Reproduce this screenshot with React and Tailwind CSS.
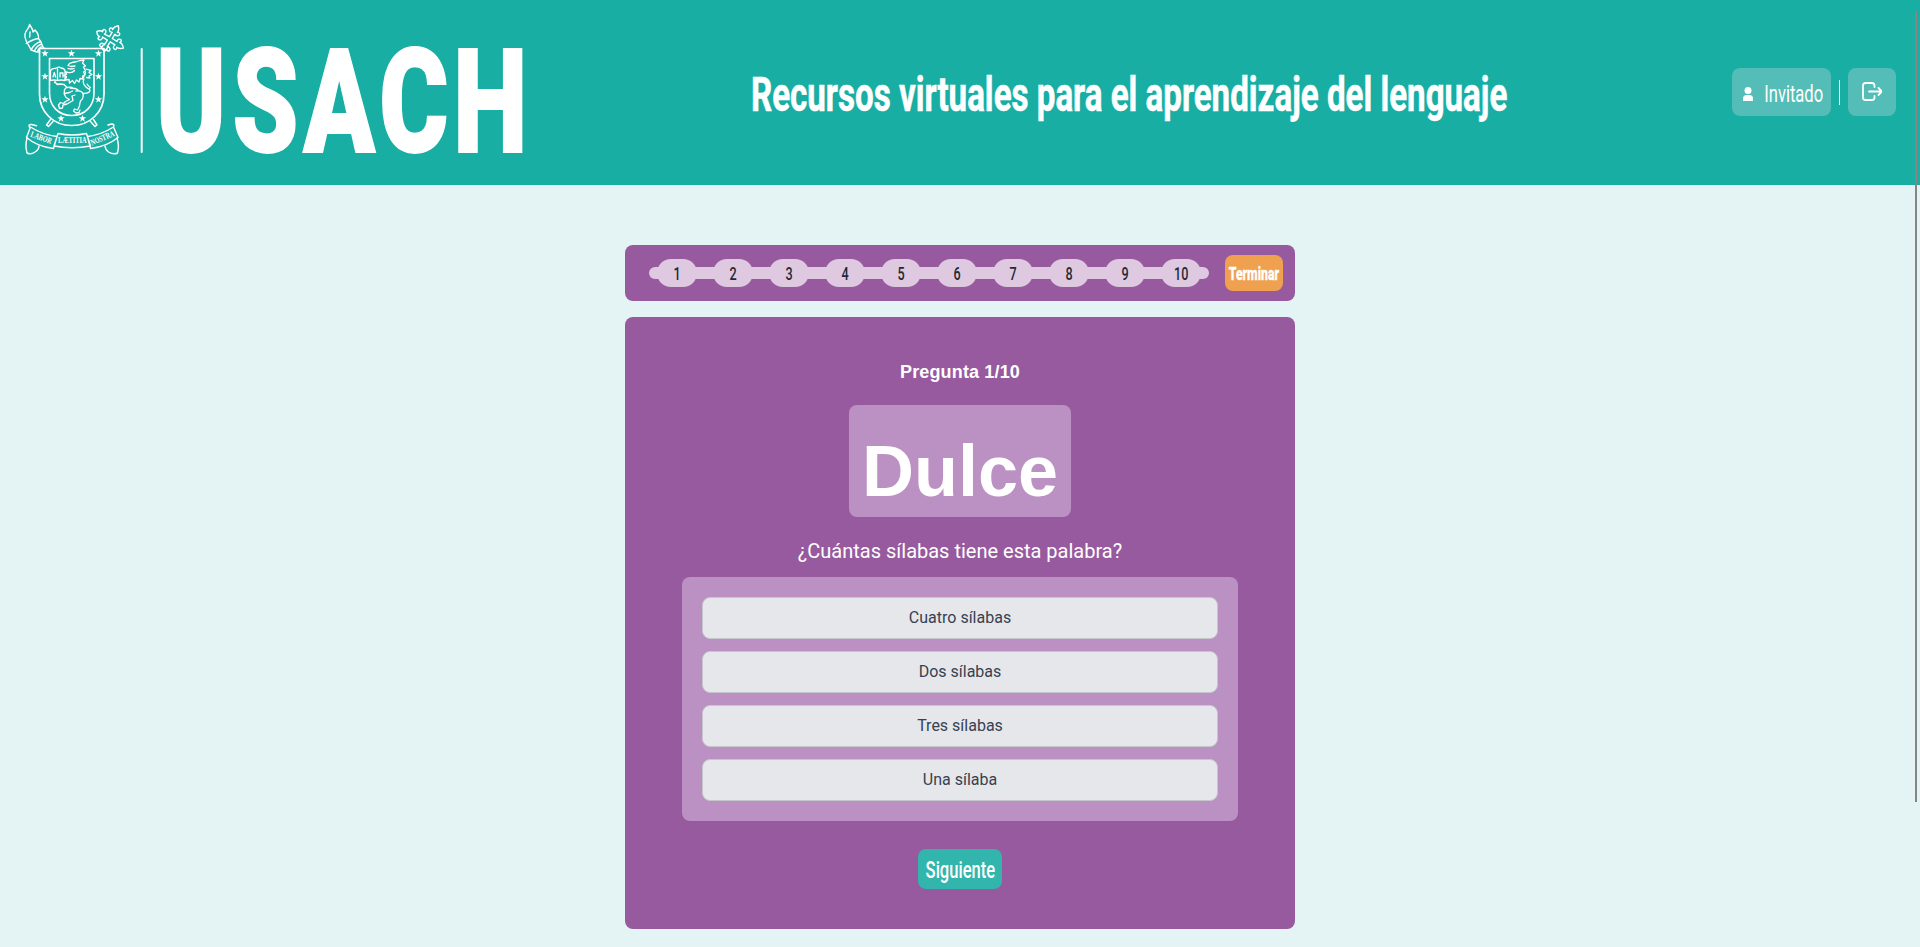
const star = "M0,-3.8 L0.9,-1.2 3.7,-1.2 1.5,0.5 2.3,3.2 0,1.6 -2.3,3.2 -1.5,0.5 -3.7,-1.2 -0.9,-1.2Z";
const stars = [[45, 53.5], [71.5, 53.5], [98.5, 53.5], [45, 76.5], [98.5, 76.5], [45, 99.5], [98.5, 99.5], [61, 118.5], [82.5, 118.5]];

function Logo() {
  return (
    <svg width="540" height="185" viewBox="0 0 540 185" fill="none" stroke="#fff" strokeLinejoin="round" strokeLinecap="round" className="shrink-0 overflow-visible">
      {/* torch */}
      <g strokeWidth="1.4">
        <path d="M29.5 24.500c.5 3-3.500 5-4.500 9.500-.6 3 .2 5 1.200 7M29.500 24.500c2.500 3.500 3.500 5 3.500 7.500l2-2c2.500 2.500 4 4.500 3.500 8.500M26.200 41l5 9c2-4.500 5-7 9.500-8.500l-2.200-3c-4 .5-9 3-12.300 5" />
        <path d="M31.200 50l3 1.200c1.500-3.500 4-6 7.500-7.200l-1-2.500M34.200 51.200l3 .8c1-3 3-5 5.500-5.500l-1-2.500M37.200 52l2.500-.5M42.700 46.500l1.500 2M30 32c-.5 2 .5 3.500-.5 5" />
      </g>
      {/* cross */}
      <g strokeWidth="1.250" transform="translate(109.700 39.500) rotate(32) scale(1.12)">
        <path d="M-1.500 -2V-6.500C-4 -5.500 -5.500 -7 -5 -9C-4 -10 -3 -9.500 -2.500 -9C-3 -11.500 -1.500 -13 0 -14.500C1.500 -13 3 -11.500 2.500 -9C3 -9.500 4 -10 5 -9C5.500 -7 4 -5.500 1.500 -6.500V-2H6.500C5.500 -4 7 -5.500 9 -5C10 -4 9.500 -3 9 -2.500C11.500 -3 13 -1.500 14.500 0C13 1.500 11.500 3 9 2.500C9.500 3 10 4 9 5C7 5.500 5.500 4 6.500 1.500H1.500V6.500C4 5.500 5.500 7 5 9C4 10 3 9.500 2.500 9C2.500 10 1.500 10.500 0 11C-1.500 10.500 -3 10 -2.500 9C-3 9.500 -4 10 -5 9C-5.500 7 -4 5.500 -1.500 6.500V1.500H-6.500C-5.500 4 -7 5.500 -9 5C-10 4 -9.500 3 -9 2.500C-11.500 3 -12.500 1.500 -13.500 0C-12.500 -1.500 -11.500 -3 -9 -2.500C-9.500 -3 -10 -4 -9 -5C-7 -5.500 -5.500 -4 -6.500 -1.500Z" />
      </g>
      <path strokeWidth="1.300" d="M104.500 43.500L101 48M108.500 46.500L104.500 51.500" />
      {/* shield */}
      <path strokeWidth="1.700" d="M39.500 48.500H104V94C104 112 90 125.500 71.700 125.500S39.500 112 39.500 94Z" />
      <path strokeWidth="1.600" d="M49.500 58.500H94V93C94 106 85 115.500 71.700 115.500S49.500 106 49.500 93Z" />
      {stars.map(([x, y]) => (
        <path key={`${x}-${y}`} d={star} transform={`translate(${x} ${y})`} fill="#fff" stroke="none" />
      ))}
      {/* lion holding a tablet */}
      <g strokeWidth="1.300">
        <path d="M50.500 70.500q2-2.500 5-2q3-2.500 5.500-.5q3 0 4 2.500v10q-4-1-7.500 0q-3.500-1-7 0ZM57.500 69v11M53 77l1.300-4.500 1.300 4.500M60 77v-4h3v4" />
        <path d="M68 65.500q1-2.500 4-3l5-1 3-1 4-.5-1.500 3 3 3-2 1 2 4-2 1 1.500 3-2.500 1 .5 3-3-.5-1 3.500-2.500-2-2 3.500-2-3-3 2.500-.5-3.500-3.500.5 1-3.500-3-1 3-1-1-2.500 3 .5q4 .5 6-2M68 65.500l3 1 4-.5M68 68.500q3 1 6 0" />
        <path d="M55 81.500l2 3 3-.5 4 .5 3 3q4-1 6 .5M54.500 82.500l3 1.500M66.500 87.500q-3 2-2 6l5-1 3-1.500M70 88q6 0 8 2M64 93.500l2 4 3.500 2-4 2-2 2-3-1-2 2.500 1 3.500 3-.5.500-3 4-1 6-3.500-1-4.500 3-1" />
        <path d="M76 91q6-1 7 3t-2.500 7q-1 3-1 5l-2 4-3-1-1 2 2.500 2 3-.5 1-2.500M86 69q3 1 5 1.500l-2 2 3 2-3 1.500 1 2-3.500-.5M84 79q-2 4 1.500 7.500t4 2q2 5-6 5M85.500 72.500l-2 5M87 84q2 3 3.500 3.500" />
      </g>
      {/* crossed staff ends */}
      <path strokeWidth="1.500" d="M50.500 119.500L46.500 125L48.500 126.500L53 121.500M93.500 119.500L97 125L95 126.500L90.500 121.500" />
      {/* ribbon */}
      <g strokeWidth="1.400">
        <path d="M29.500 127.500q-1.500-3.500 2-3l5 1.200M26.500 137.500L30.500 127Q42 134.500 57 136.500L53.500 148.500Q37 146.500 26.500 137.500ZM58 133.500Q72 136.500 86.500 133.500L90.500 146Q72 149.500 54 146ZM87.500 136.500Q102 134.500 113.500 127L118 137.500Q107 146.500 90.500 148.500ZM108 125l3.500-1q3.500 0 2 3" />
        <path d="M27 138q-2 8 0 15q4 2 8-1q4-2.500 4-6M117 138q2.500 8 .500 15q-4 2-9-1q-3-2-3.500-6" />
      </g>
      <g fill="#fff" stroke="none" fontFamily="Liberation Serif, serif" fontWeight="700" fontSize="8.500">
        <text x="30" y="136.500" transform="rotate(20 30 136.500)" textLength="22" lengthAdjust="spacingAndGlyphs">LABOR</text>
        <text x="58" y="143" textLength="28.500" lengthAdjust="spacingAndGlyphs">LÆTITIA</text>
        <text x="92" y="145.500" transform="rotate(-23 92 145.500)" textLength="25" lengthAdjust="spacingAndGlyphs">NOSTRA</text>
      </g>
      <path strokeWidth="2" d="M141.700 49V152" />
      <text
        transform="scale(0.725 1)"
        x="263.700 366.200 467.900 571 676.400"
        y="152.300"
        textAnchor="middle"
        fill="#fff"
        strokeWidth="1.800"
        strokeLinejoin="miter"
        fontFamily="Roboto, sans-serif"
        fontWeight="900"
        fontSize="145.500"
      >
        USACH
      </text>
    </svg>
  );
}

const options = ["Cuatro sílabas", "Dos sílabas", "Tres sílabas", "Una sílaba"];

export default function App() {
  return (
    <div className="relative h-[947px] w-full overflow-hidden bg-[#e4f3f3] font-['Roboto',sans-serif]">
      <header className="flex h-[185px] items-center bg-[#18aea4] pr-6 text-white">
        <Logo />
        <h1 className="flex flex-1 justify-center pt-[5px] pr-[13px] text-[48px] leading-[56px] font-bold whitespace-nowrap [-webkit-text-stroke:0.6px_white]">
          <span className="flex w-[758px] justify-center"><span className="scale-x-[0.69]">Recursos virtuales para el aprendizaje del lenguaje</span></span>
        </h1>
        <div className="-mt-px flex items-center gap-2">
          <button className="flex h-12 w-[99px] items-center rounded-lg bg-[#54bdb8] pl-[11px]">
            <svg width="10" height="14" viewBox="0 0 10 14" fill="#fff" className="mt-1 shrink-0">
              <circle cx="5" cy="3.500" r="3.500" />
              <path d="M0 14v-2.500Q0 8 3.500 8h3Q10 8 10 11.500V14Z" />
            </svg>
            <span className="ml-[10px] flex w-[62px] justify-center pt-1 text-[24px] leading-8"><span className="scale-x-[0.69]">Invitado</span></span>
          </button>
          <div className="h-[25px] w-px bg-white" />
          <button className="flex size-12 items-center justify-center rounded-lg bg-[#54bdb8]">
            <svg width="20" height="20" viewBox="0 0 20 20" fill="none" stroke="#fff" strokeWidth="1.800" strokeLinecap="round" strokeLinejoin="round">
              <path d="M12.500 5V3.500Q12.500 1 10 1H3.500Q1 1 1 3.500V15.500Q1 18 3.500 18H10Q12.500 18 12.500 15.500V14M7 9.500H19.500M16.500 6L20 9.500 16.500 13" />
            </svg>
          </button>
        </div>
      </header>

      <main className="mx-auto flex w-[670px] flex-col gap-4 pt-[60px]">
        <section className="flex h-14 items-center gap-4 rounded-lg bg-[#985a9f] pr-3 pl-6">
          <div className="flex h-3 w-[560px] items-center rounded-full bg-[#dec9e1]">
            {[1, 2, 3, 4, 5, 6, 7, 8, 9, 10].map((n) => (
              <div key={n} className="flex w-14 justify-center">
                <div className="flex h-7 w-10 items-center justify-center rounded-full bg-[#dec9e1] pt-px text-[18px] leading-7 font-medium text-[#1f2937]">
                  <span className="scale-x-[0.7]">{n}</span>
                </div>
              </div>
            ))}
          </div>
          <button className="flex h-9 w-[58px] items-center justify-center rounded-lg bg-[#f0a14f] pt-px text-[18px] font-extrabold text-white [-webkit-text-stroke:0.4px_white]">
            <span className="scale-x-[0.68]">Terminar</span>
          </button>
        </section>

        <section className="flex h-[612px] flex-col items-center rounded-lg bg-[#985a9f] pt-[41px] text-white">
          <h2 className="h-[47px] font-['Liberation_Sans',sans-serif] text-[18px] leading-7 font-bold tracking-[0.15px]">Pregunta 1/10</h2>
          <div className="flex h-28 w-[222px] items-center justify-center rounded-lg bg-[#bb90c2] pt-[19px] font-['Liberation_Sans',sans-serif] text-[72px] leading-none font-bold">
            Dulce
          </div>
          <p className="mt-5 text-[20px] leading-7">¿Cuántas sílabas tiene esta palabra?</p>
          <div className="mt-3 flex w-[556px] flex-col gap-3 rounded-lg bg-[#bb90c2] p-5">
            {options.map((o) => (
              <button key={o} className="h-[42px] rounded-lg border border-[#c5c7cb] bg-[#e5e7eb] text-base text-[#374151]">{o}</button>
            ))}
          </div>
          <button className="mt-7 flex h-10 w-[84px] items-center justify-center rounded-lg bg-[#32b5ac] pt-px text-[24px] font-medium">
            <span className="scale-x-[0.69]">Siguiente</span>
          </button>
        </section>
      </main>

      <div className="absolute top-3 right-[3px] h-[790px] w-0.5 bg-[#858585]" />
    </div>
  );
}
